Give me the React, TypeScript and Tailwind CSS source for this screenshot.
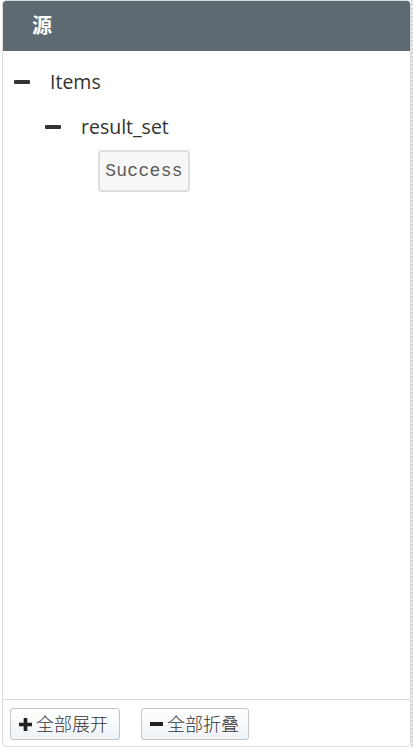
const font = { fontFamily: '"Open Sans", "Noto Sans CJK SC", sans-serif' };

function Minus({ className = '' }: { className?: string }) {
  return <span className={`inline-block w-[16px] h-[4px] bg-[#333] rounded-[1px] ${className}`} />;
}

function PlusIcon() {
  return (
    <svg width="13" height="13" viewBox="0 0 13 13" className="shrink-0">
      <rect x="4.7" y="0" width="3.6" height="13" fill="#222" />
      <rect x="0" y="4.7" width="13" height="3.6" fill="#222" />
    </svg>
  );
}

function FooterButton({ icon, label, className = '' }: { icon: React.ReactNode; label: string; className?: string }) {
  return (
    <button
      className={`h-[32px] flex items-center gap-[4px] px-[8px] border border-[#c4c4c4] rounded-[3px] bg-gradient-to-b from-white to-[#eef3f8] text-[18px] font-light text-[#333] ${className}`}
    >
      {icon}
      <span>{label}</span>
    </button>
  );
}

export default function App() {
  return (
    <div className="w-[413px] h-[748px] bg-white flex" style={font}>
      <div className="ml-[2px] w-[409px] h-[747px] border border-[#dcdcdc] rounded-[4px] flex flex-col overflow-hidden">
        {/* Header */}
        <div className="h-[50px] shrink-0 bg-[#5e6a72] flex items-center pl-[29px]">
          <span className="text-white text-[20px] font-bold">源</span>
        </div>

        {/* Tree */}
        <div className="flex-1 pt-[18px]">
          <div className="flex items-center h-[26px] pl-[11px]">
            <Minus />
            <span className="ml-[20px] text-[19.5px] text-[#333]">Items</span>
          </div>
          <div className="flex items-center h-[26px] pl-[42px] mt-[19px]">
            <Minus />
            <span className="ml-[20px] text-[19.5px] text-[#333]">result_set</span>
          </div>
          <div className="pl-[95px] mt-[10px]">
            <div
              className="inline-flex items-center justify-center w-[92px] h-[42px] border-2 border-[#dedede] rounded-[4px] bg-[#f7f7f7] text-[18px] text-[#5a5a5a] tracking-[0.3px]"
              style={{ fontFamily: '"Liberation Mono", monospace' }}
            >
              Success
            </div>
          </div>
        </div>

        {/* Footer */}
        <div className="h-[47px] shrink-0 border-t border-[#dcdcdc] flex items-start pt-[8px] pl-[7px] gap-[21px]">
          <FooterButton icon={<PlusIcon />} label="全部展开" className="w-[110px]" />
          <FooterButton icon={<span className="inline-block w-[13px] h-[4px] bg-[#222]" />} label="全部折叠" className="w-[108px]" />
        </div>
      </div>
      <div
        className="w-[2px] h-[748px]"
        style={{ backgroundImage: 'repeating-linear-gradient(to bottom, #d8d8d8 0 2px, #ececec 2px 4px)' }}
      />
    </div>
  );
}
